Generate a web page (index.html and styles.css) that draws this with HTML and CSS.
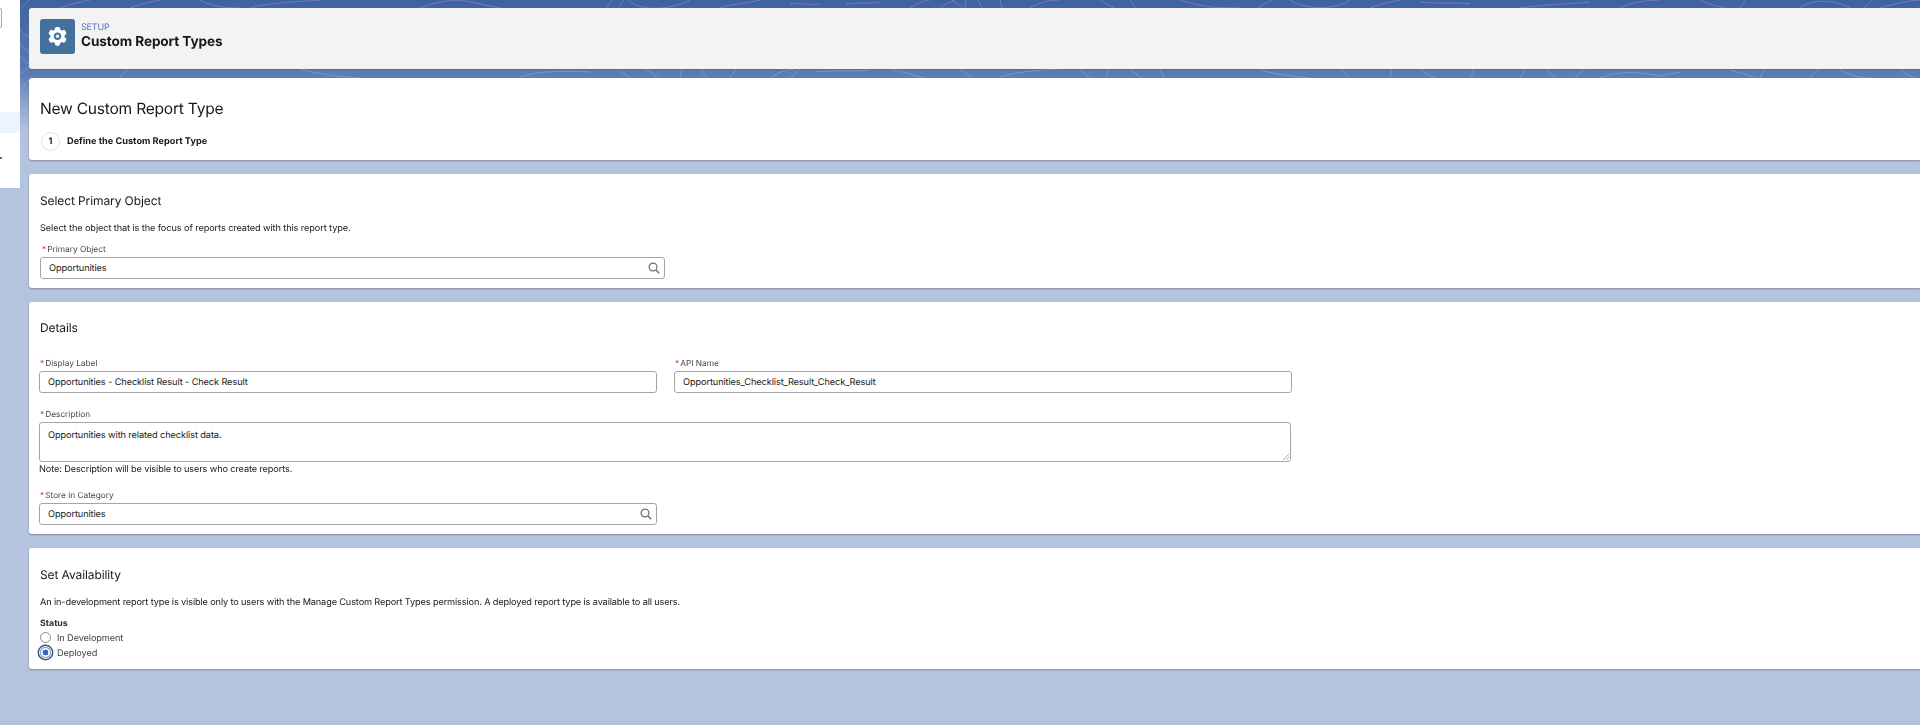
FILE: index.html
```html
<!DOCTYPE html>
<html lang="en">
<head>
<meta charset="utf-8">
<title>New Custom Report Type</title>
<link rel="stylesheet" href="styles.css">
</head>
<body>
<svg class="contours" width="1920" height="110" viewBox="0 0 1920 110" fill="none" stroke="#fff" stroke-width="1" aria-hidden="true">
  <path d="M20 30C24 34 26 36 29 37M20 44C24 47 26 50 29 52M20 56C23 60 26 62 29 64M21 8C24 6 26 3 30 0M20 74C23 72 26 70 29 66M20 90C23 86 26 84 29 80"/>
  <path d="M60 8C70 4 80 2 90 0M130 8C140 4 150 2 160 0M200 0C210 6 225 8 240 8M250 8C270 2 300 2 320 0M420 8C440 0 460 -2 480 4L500 8M606 8L612 0M618 8L624 0M628 0C640 12 670 10 690 0M720 8C730 4 745 4 760 0M790 4C800 2 810 6 820 4M846 4C860 2 870 4 880 2M910 8C920 2 925 0 930 0M940 8C945 4 950 2 955 0M952 0C958 4 960 6 962 8M965 8C965 4 966 2 966 0M978 0L982 8M1000 0L1002 8M1030 8C1040 2 1050 0 1060 0M1100 0C1106 4 1110 6 1114 8M1130 0C1132 4 1134 6 1136 8M1180 0C1200 6 1210 8 1240 8M1258 8C1262 4 1268 2 1272 0M1290 0C1310 12 1340 8 1350 0M1370 8C1380 4 1390 2 1400 0M1420 2C1440 4 1460 2 1470 4M1520 8C1550 4 1570 4 1590 2M1620 8C1630 2 1650 0 1660 0M1700 0C1710 6 1720 6 1725 8M1740 8L1746 0M1800 8C1810 0 1830 -2 1850 8M1865 8C1868 4 1870 2 1872 0M1880 8C1895 4 1910 0 1920 0"/>
  <path d="M120 78C122 74 124 72 128 69M300 69C310 72 330 76 360 78M520 78C530 72 560 70 590 72M620 70L630 78M645 69C652 72 655 76 658 78M680 78L682 69M700 69L708 78M730 78L736 69M770 78C780 72 785 70 795 69M790 78L800 69M815 72C830 70 850 72 870 70M890 69C905 72 915 76 925 78M960 69L972 78M1000 78C1010 72 1040 70 1060 69M1080 69L1090 78M1106 78L1108 69M1130 69C1134 72 1138 76 1142 78M1160 70L1164 78M1260 69C1270 74 1290 76 1310 78M1340 69L1350 78M1390 78L1392 69M1420 69C1425 72 1430 76 1435 78M1470 78L1474 69M1520 78C1522 74 1524 72 1526 69M1545 69C1550 72 1552 76 1556 78M1575 78C1580 72 1582 72 1585 69M1600 78C1620 70 1640 72 1660 76L1680 72M1730 70C1745 74 1750 76 1755 78M1760 78C1762 74 1762 72 1765 69M1810 78C1812 74 1815 72 1818 69M1840 69C1850 76 1860 78 1870 78M1900 70C1905 74 1910 76 1915 78"/>
</svg>
<div class="app">
  <aside class="sidebar">
    <div class="side-box"></div>
    <div class="side-active"></div>
    <div class="side-mark"></div>
  </aside>
  <main class="content">
    <header class="page-header">
      <div class="page-icon">
        <svg width="35" height="35" viewBox="0 0 35 35" aria-hidden="true">
          <g fill="#fff" transform="translate(17.5 17.3)">
            <rect x="-2.6" y="-9.4" width="5.2" height="5" rx="1.6"/>
            <rect x="-2.6" y="-9.4" width="5.2" height="5" rx="1.6" transform="rotate(60)"/>
            <rect x="-2.6" y="-9.4" width="5.2" height="5" rx="1.6" transform="rotate(120)"/>
            <rect x="-2.6" y="-9.4" width="5.2" height="5" rx="1.6" transform="rotate(180)"/>
            <rect x="-2.6" y="-9.4" width="5.2" height="5" rx="1.6" transform="rotate(240)"/>
            <rect x="-2.6" y="-9.4" width="5.2" height="5" rx="1.6" transform="rotate(300)"/>
            <circle r="5.5" fill="none" stroke="#fff" stroke-width="3.4"/>
            <circle r="1.8" fill="#e8eef5"/>
          </g>
        </svg>
      </div>
      <div class="page-titles">
        <div class="eyebrow">SETUP</div>
        <h1 class="page-title">Custom Report Types</h1>
      </div>
    </header>

    <section class="card card-intro">
      <h2 class="intro-title">New Custom Report Type</h2>
      <div class="step">
        <span class="step-num">1</span>
        <span class="step-label">Define the Custom Report Type</span>
      </div>
    </section>

    <section class="card card-primary">
      <h3 class="section-title">Select Primary Object</h3>
      <p class="section-desc">Select the object that is the focus of reports created with this report type.</p>
      <div class="field field-primary">
        <div class="field-label"><span class="req">*</span>Primary Object</div>
        <div class="input">Opportunities
          <svg class="search" width="12" height="12" viewBox="0 0 12 12" fill="none" stroke="#706e6b" aria-hidden="true"><circle cx="5" cy="5" r="3.9" stroke-width="1.2"/><path d="M8 8l3.2 3.2" stroke-width="1.5"/></svg>
        </div>
      </div>
    </section>

    <section class="card card-details">
      <h3 class="section-title">Details</h3>
      <div class="details-body">
        <div class="field-row">
          <div class="field">
            <div class="field-label"><span class="req">*</span>Display Label</div>
            <div class="input">Opportunities - Checklist Result - Check Result</div>
          </div>
          <div class="field">
            <div class="field-label"><span class="req">*</span>API Name</div>
            <div class="input">Opportunities_Checklist_Result_Check_Result</div>
          </div>
        </div>
        <div class="field field-desc">
          <div class="field-label"><span class="req">*</span>Description</div>
          <div class="input textarea">Opportunities with related checklist data.
            <svg class="grip" width="6" height="6" viewBox="0 0 6 6" stroke="#8a8a8a" stroke-width=".7" aria-hidden="true"><path d="M0 6L6 0M3 6L6 3"/></svg>
          </div>
          <div class="note">Note: Description will be visible to users who create reports.</div>
        </div>
        <div class="field field-store">
          <div class="field-label"><span class="req">*</span>Store in Category</div>
          <div class="input">Opportunities
            <svg class="search" width="12" height="12" viewBox="0 0 12 12" fill="none" stroke="#706e6b" aria-hidden="true"><circle cx="5" cy="5" r="3.9" stroke-width="1.2"/><path d="M8 8l3.2 3.2" stroke-width="1.5"/></svg>
          </div>
        </div>
      </div>
    </section>

    <section class="card card-avail">
      <h3 class="section-title">Set Availability</h3>
      <p class="section-desc">An in-development report type is visible only to users with the Manage Custom Report Types permission. A deployed report type is available to all users.</p>
      <div class="status-label">Status</div>
      <div class="radio-row"><span class="radio"></span><span class="radio-text">In Development</span></div>
      <div class="radio-row"><span class="radio radio-on"></span><span class="radio-text">Deployed</span></div>
    </section>
  </main>
</div>
</body>
</html>
```

FILE: styles.css
```css
* { box-sizing: border-box; }
html, body { margin: 0; height: 725px; overflow: hidden; }
body {
  position: relative;
  font-family: Inter, "Liberation Sans", sans-serif;
  font-size: 10px;
  color: #181818;
  text-rendering: geometricPrecision;
  background: linear-gradient(180deg, #40629f 0, #5c7cb3 75px, #8aa2ca 100px, #b1c1dc 130px, #b5c4de 150px);
}
.contours { position: absolute; left: 0; top: 0; opacity: .2; filter: blur(.4px); }
.app { position: relative; display: flex; height: 725px; filter: blur(.3px); }

.sidebar { position: relative; width: 20px; height: 188px; background: #fff; flex: none; overflow: hidden; }
.side-box { position: absolute; left: -4px; top: 8px; width: 6px; height: 20px; border: 1px solid #a9a9a9; border-radius: 2px; }
.side-active { position: absolute; left: 0; top: 112px; width: 100%; height: 21px; background: #eef4ff; }
.side-mark { position: absolute; left: 0; top: 157px; width: 2px; height: 2px; background: #666; }

.content { flex: 1; min-width: 0; padding: 8px 0 0 9px; }

.page-header {
  height: 61px; display: flex; align-items: flex-start; gap: 6px;
  padding: 11px 11px; background: #f3f3f3; border-radius: 3px 0 0 3px;
  box-shadow: 0 1px 1px rgba(0,0,0,.12);
}
.page-icon { width: 35px; height: 35px; flex: none; background: #44709c; border-radius: 3px; }
.eyebrow { font-size: 9px; line-height: 11px; margin-top: 3px; letter-spacing: -.2px; color: #4f74ba; }
.page-title { margin: 0; font-size: 13.6px; line-height: 19px; font-weight: 700; letter-spacing: -.1px; color: #181818; }

.card {
  margin-top: 14px; background: #fff; border-radius: 3px 0 0 3px;
  box-shadow: 0 1px 2px rgba(0,0,0,.3); padding-left: 11px;
}
.card-intro { margin-top: 9px; height: 82px; padding-top: 20px; }
.intro-title { margin: 0; font-size: 15.6px; line-height: 21px; font-weight: 400; letter-spacing: -.25px; }
.step { display: flex; align-items: center; gap: 7px; margin-top: 13px; padding-left: 1px; }
.step-num {
  width: 19px; height: 19px; border: 1px solid #e2e2e2; border-radius: 50%;
  display: flex; align-items: center; justify-content: center; font-size: 9px; font-weight: 700;
}
.step-label { font-size: 9.2px; font-weight: 700; }

.section-title { margin: 0; font-size: 12px; line-height: 16px; font-weight: 400; letter-spacing: -.1px; }
.section-desc { margin: 0 0 -1px; font-size: 9.2px; line-height: 13px; letter-spacing: -.1px; }

.card-primary { height: 114px; padding-top: 19px; }
.card-primary .section-desc { margin-top: 13px; }
.field-primary { width: 625px; margin-top: 10px; }
.field-primary .field-label { padding-left: 2px; }

.field-label { margin-bottom: -2px; font-size: 8.3px; line-height: 13px; color: #444; padding-left: 1px; }
.req { color: #c23934; margin-right: 1px; }
.input {
  position: relative; height: 22px; margin-top: 2px; padding: 0 8px;
  display: flex; align-items: center;
  font-size: 9.2px; letter-spacing: -.1px; color: #181818; background: #fff;
  border: 1px solid #a5a5a5; border-radius: 3px;
}
.search { position: absolute; right: 4px; top: 4px; }

.card-details { height: 232px; padding: 18px 0 0 0; }
.card-details .section-title { padding-left: 11px; }
.details-body { width: 1262px; margin-top: 22px; padding-left: 10px; }
.field-row { display: grid; grid-template-columns: 618px 617.5px; column-gap: 17px; }
.field-desc { margin-top: 16px; }
.textarea { height: 40px; align-items: flex-start; padding-top: 7px; }
.grip { position: absolute; right: 1px; bottom: 1px; }
.note { margin: 1px 0 -1px; font-size: 9.2px; line-height: 13px; letter-spacing: -.13px; }
.field-store { margin-top: 15px; width: 618px; }

.card-avail { height: 121px; padding-top: 19px; }
.card-avail .section-desc { margin-top: 13px; letter-spacing: -.14px; }
.status-label { margin-top: 10px; margin-bottom: -1px; font-size: 8.8px; line-height: 12px; font-weight: 700; color: #333; }
.radio-row { display: flex; align-items: center; gap: 6px; height: 15px; }
.status-label + .radio-row { margin-top: 1px; }
.radio { width: 11px; height: 11px; flex: none; border: 1px solid #8a8a8a; border-radius: 50%; background: #fff; }
.radio-on {
  position: relative;
  background: radial-gradient(circle, #2f67c8 0 2.7px, #fff 3.2px);
  box-shadow: 0 0 0 1px #fff, 0 0 0 2.4px #2a5699;
}
.radio-text { padding-top: 2px; font-size: 9.2px; letter-spacing: -.12px; color: #444; }
```
